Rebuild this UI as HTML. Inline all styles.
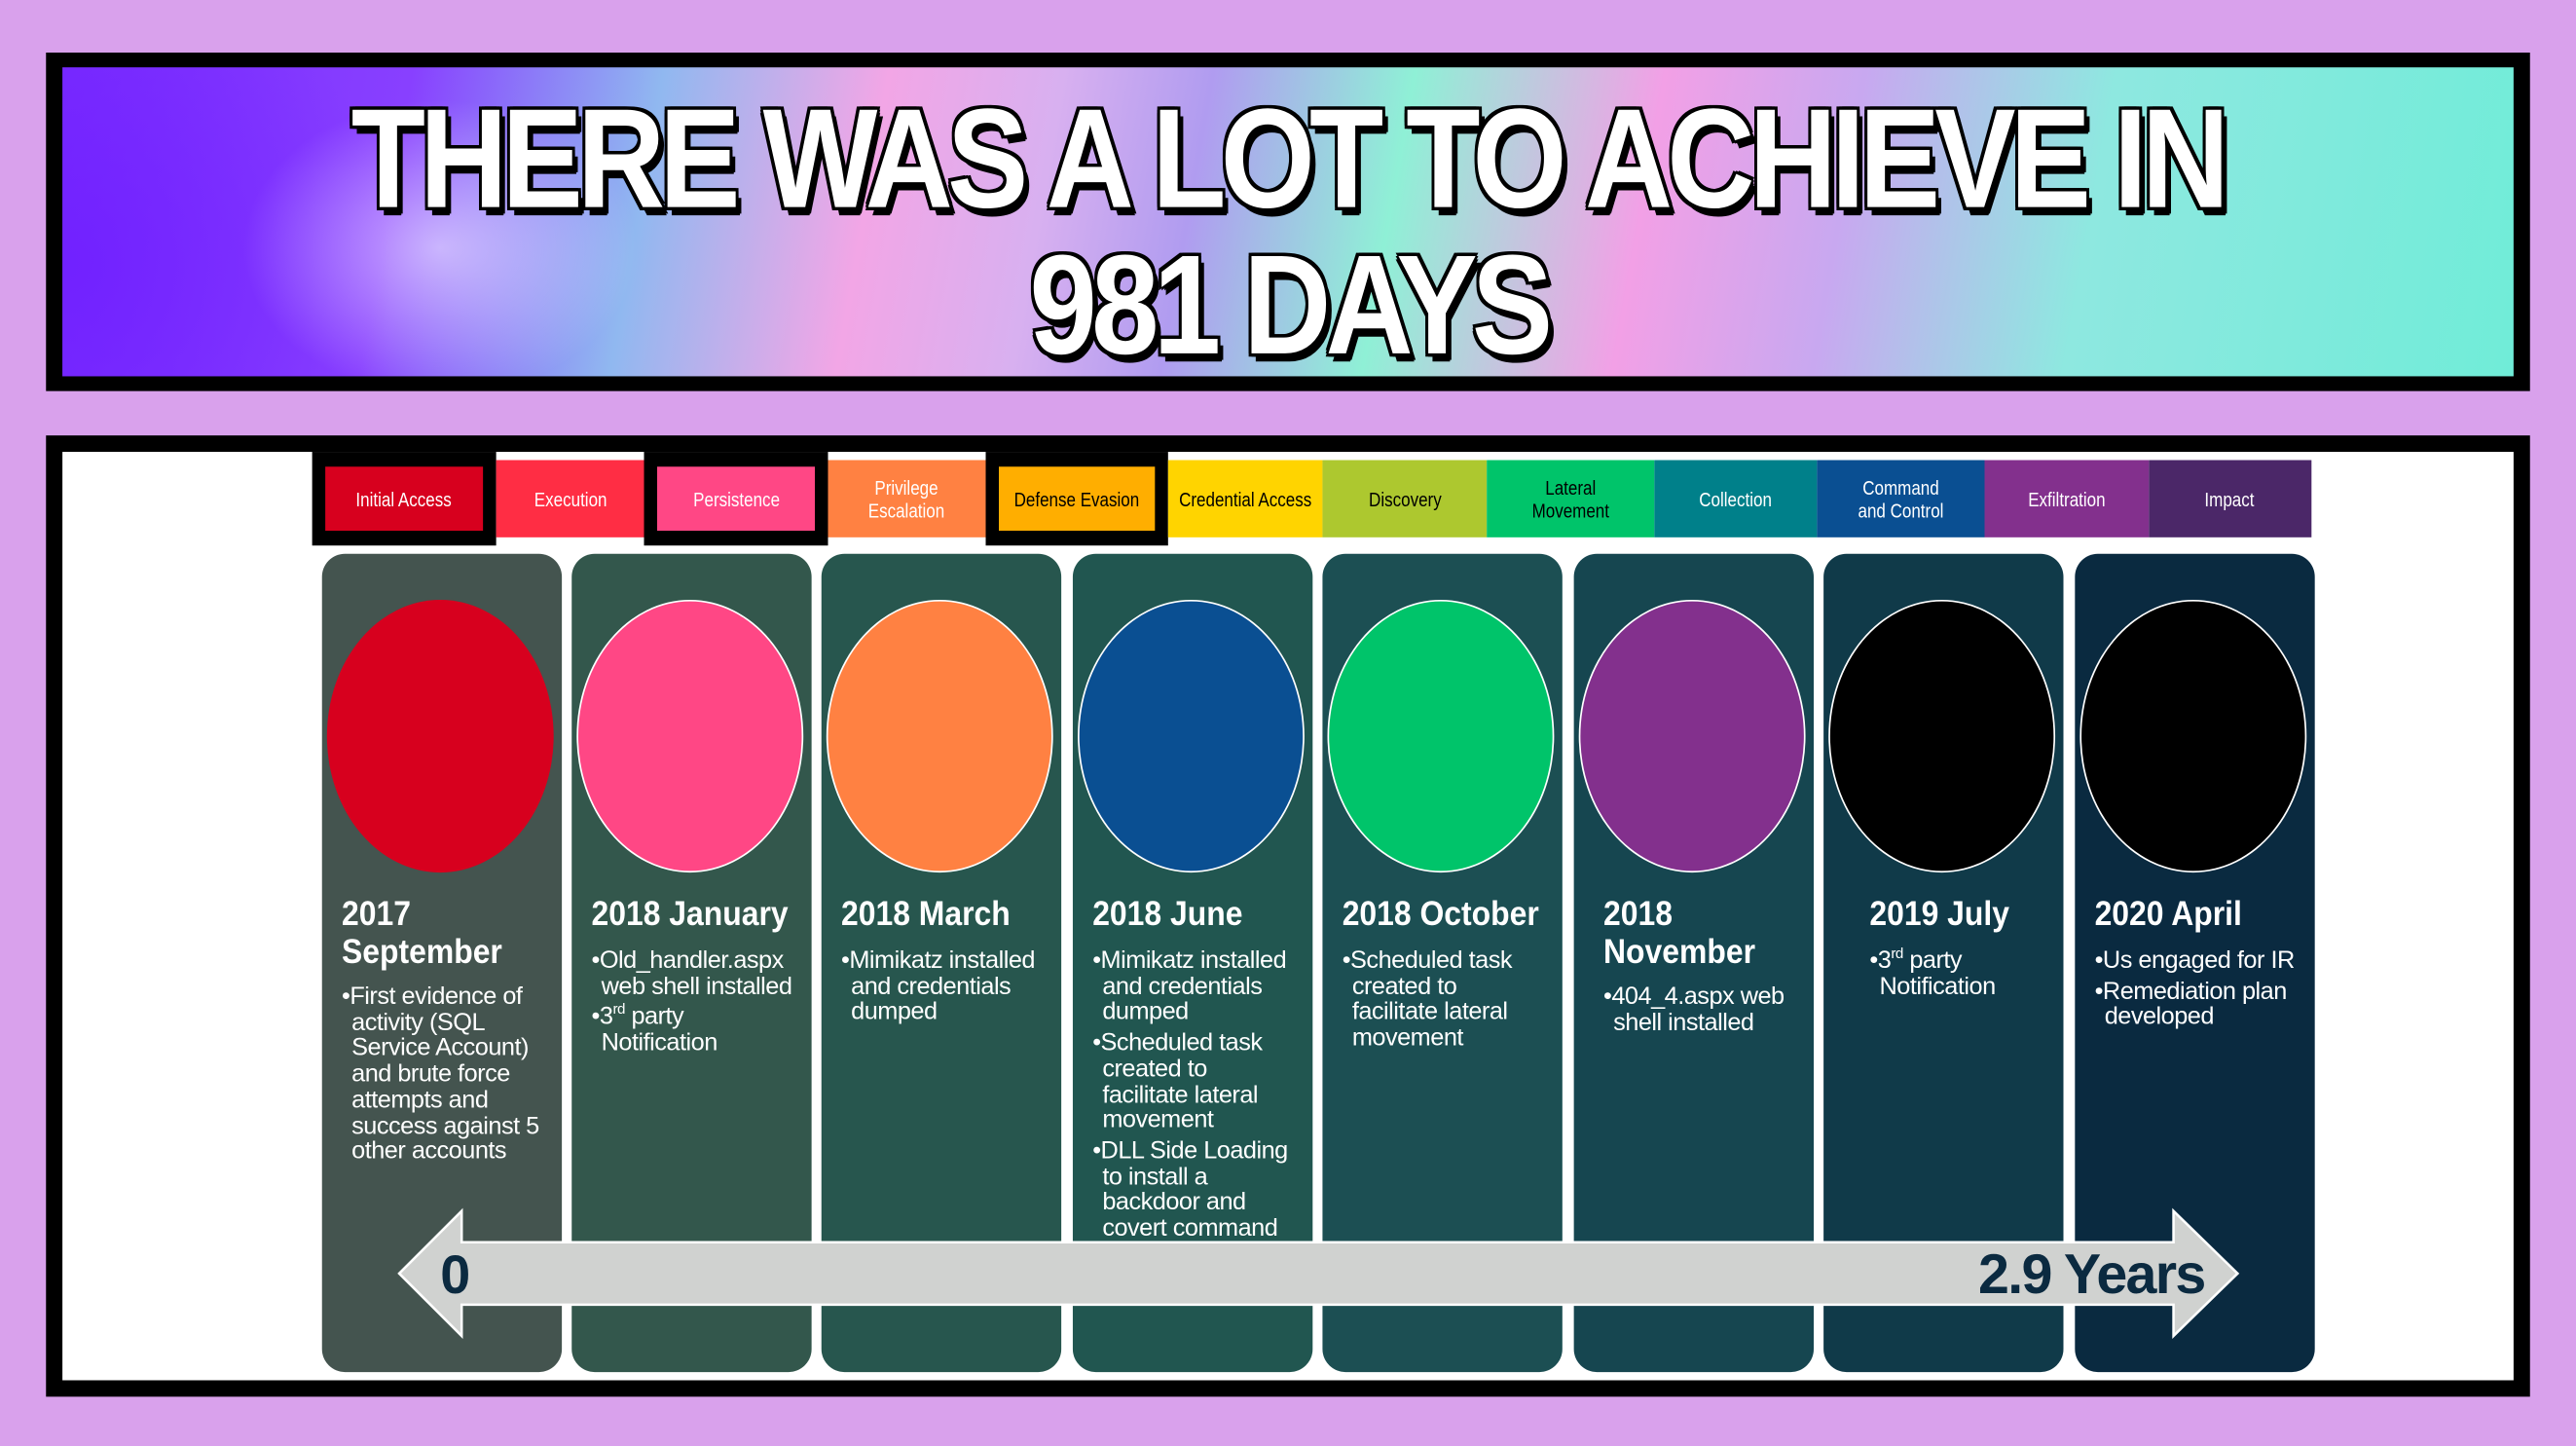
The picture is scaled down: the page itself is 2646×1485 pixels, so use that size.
<!DOCTYPE html>
<html><head><meta charset="utf-8"><style>
html,body{margin:0;padding:0;width:2646px;height:1485px;overflow:hidden;background:#d9a1ec}
#w{position:absolute;left:0;top:0;width:1568px;height:880px;transform:scale(1.6875);transform-origin:0 0;font-family:"Liberation Sans",sans-serif}
.abs{position:absolute}
#ban{left:28px;top:32px;width:1512px;height:206px;background:#000}
#grad{left:10px;top:9px;width:1492px;height:188px;overflow:hidden;
background:
radial-gradient(ellipse 120px 90px at 230px 110px,rgba(255,255,255,.55),rgba(255,255,255,0)),
radial-gradient(ellipse 200px 200px at 0px 120px,rgba(110,30,255,.8),rgba(110,30,255,0)),
linear-gradient(100deg,#7a2cff 0%,#8840ff 14%,#90b8f0 24%,#f2a6e6 33%,#d8b0f0 40%,#b09cf0 46%,#8ff0d6 54%,#f2a0e6 64%,#c8a8f0 72%,#8ee8e0 82%,#70ecd8 100%)}
.t{position:absolute;left:0;width:1568px;text-align:center;color:#fff;font-weight:bold;font-size:86px;line-height:86px;letter-spacing:-4px;
text-shadow:-2px -2px 0 #000,2px -2px 0 #000,-2px 2px 0 #000,2px 2px 0 #000,0 -2px 0 #000,0 2px 0 #000,-2px 0 0 #000,2px 0 0 #000,4px 4px 0 #000,3px 5px 0 #000}
.t span{display:inline-block;transform:scaleX(0.86)}
#pan{left:28px;top:265px;width:1512px;height:585px;background:#000}
#wh{left:38px;top:275px;width:1492px;height:565px;background:#fff}
.tc{position:absolute;top:280px;height:47px;display:flex;align-items:center;justify-content:center;text-align:center;font-size:12px;line-height:14px;color:#fff;white-space:nowrap}
.tc span{display:inline-block;transform:scaleX(0.84)}
.bx{position:absolute;top:275px;height:57px;background:#000}
.col{position:absolute;top:337px;width:146px;height:498px;border-radius:14px}
.el{position:absolute;top:28px;left:3px;width:138px;height:166px;border-radius:50%;box-sizing:border-box;border:1.5px solid #fff}
.h{position:absolute;top:208px;left:12px;color:#fff;font-weight:bold;font-size:21px;line-height:23px;white-space:nowrap;transform:scaleX(0.9);transform-origin:0 0}
.b{position:absolute;left:12px;color:#fff;font-size:15px;line-height:15.7px;letter-spacing:-0.3px;white-space:nowrap}
.b div{padding-left:6px;text-indent:-6px;margin-bottom:3px}
sup{font-size:9px;line-height:0}
</style></head><body><div id="w">
<div id="ban" class="abs"><div id="grad" class="abs"></div></div>
<div class="t" style="top:54px"><span>THERE WAS A LOT TO ACHIEVE IN</span></div>
<div class="t" style="top:143px"><span>981 DAYS</span></div>
<div id="pan" class="abs"></div><div id="wh" class="abs"></div>
<div class="bx" style="left:190px;width:112px"></div>
<div class="bx" style="left:392px;width:112px"></div>
<div class="bx" style="left:600px;width:111px"></div>
<div class="tc" style="left:198px;width:96px;top:284px;height:39px;background:#d7001e"><span>Initial Access</span></div>
<div class="tc" style="left:302px;width:90px;background:#ff2d44"><span>Execution</span></div>
<div class="tc" style="left:400px;width:96px;top:284px;height:39px;background:#ff4785"><span>Persistence</span></div>
<div class="tc" style="left:504px;width:96px;background:#ff8142"><span>Privilege<br>Escalation</span></div>
<div class="tc" style="left:608px;width:95px;top:284px;height:39px;background:#ffae00;color:#000"><span>Defense Evasion</span></div>
<div class="tc" style="left:711px;width:94px;background:#ffd400;color:#000"><span>Credential Access</span></div>
<div class="tc" style="left:805px;width:100px;background:#adc82f;color:#000"><span>Discovery</span></div>
<div class="tc" style="left:905px;width:102px;background:#00c46a;color:#000"><span>Lateral<br>Movement</span></div>
<div class="tc" style="left:1007px;width:99px;background:#00808a"><span>Collection</span></div>
<div class="tc" style="left:1106px;width:102px;background:#0a4f92"><span>Command<br>and Control</span></div>
<div class="tc" style="left:1208px;width:100px;background:#83308d"><span>Exfiltration</span></div>
<div class="tc" style="left:1308px;width:99px;background:#4b2768"><span>Impact</span></div>

<div class="col" style="left:196px;background:#44544f"><div class="el" style="background:#d7001e;border:none"></div><div class="h">2017<br>September</div><div class="b" style="top:262px"><div>•First evidence of<br>activity (SQL<br>Service Account)<br>and brute force<br>attempts and<br>success against 5<br>other accounts</div></div></div>
<div class="col" style="left:348px;background:#33574c"><div class="el" style="background:#ff4785"></div><div class="h">2018 January</div><div class="b" style="top:240px"><div>•Old_handler.aspx<br>web shell installed</div><div>•3<sup>rd</sup> party<br>Notification</div></div></div>
<div class="col" style="left:500px;background:#27564e"><div class="el" style="background:#ff8142"></div><div class="h">2018 March</div><div class="b" style="top:240px"><div>•Mimikatz installed<br>and credentials<br>dumped</div></div></div>
<div class="col" style="left:653px;background:#215650;overflow:hidden"><div class="el" style="background:#0a4f92"></div><div class="h">2018 June</div><div class="b" style="top:240px"><div>•Mimikatz installed<br>and credentials<br>dumped</div><div>•Scheduled task<br>created to<br>facilitate lateral<br>movement</div><div>•DLL Side Loading<br>to install a<br>backdoor and<br>covert command</div></div></div>
<div class="col" style="left:805px;background:#1c4f53"><div class="el" style="background:#00c46a"></div><div class="h">2018 October</div><div class="b" style="top:240px"><div>•Scheduled task<br>created to<br>facilitate lateral<br>movement</div></div></div>
<div class="col" style="left:958px;background:#164650"><div class="el" style="background:#83308d"></div><div class="h" style="left:18px">2018<br>November</div><div class="b" style="top:262px;left:18px"><div>•404_4.aspx web<br>shell installed</div></div></div>
<div class="col" style="left:1110px;background:#103a49"><div class="el" style="background:#000"></div><div class="h" style="left:28px">2019 July</div><div class="b" style="top:240px;left:28px"><div>•3<sup>rd</sup> party<br>Notification</div></div></div>
<div class="col" style="left:1263px;background:#0a2a40"><div class="el" style="background:#000"></div><div class="h">2020 April</div><div class="b" style="top:240px"><div>•Us engaged for IR</div><div>•Remediation plan<br>developed</div></div></div>

<svg class="abs" style="left:0;top:0" width="1568" height="880"><polygon points="243,775 281,737 281,756 1323,756 1323,737 1362,775 1323,813 1323,794 281,794 281,813" fill="#d0d2d0" stroke="#fff" stroke-width="1.5"/></svg>
<div class="abs" style="left:268px;top:756px;font-size:33px;font-weight:bold;color:#0b2a40;line-height:40px">0</div>
<div class="abs" style="left:1150px;width:192px;text-align:right;top:756px;font-size:34px;font-weight:bold;color:#0b2a40;line-height:40px;letter-spacing:-1px">2.9 Years</div>
</div></body></html>
